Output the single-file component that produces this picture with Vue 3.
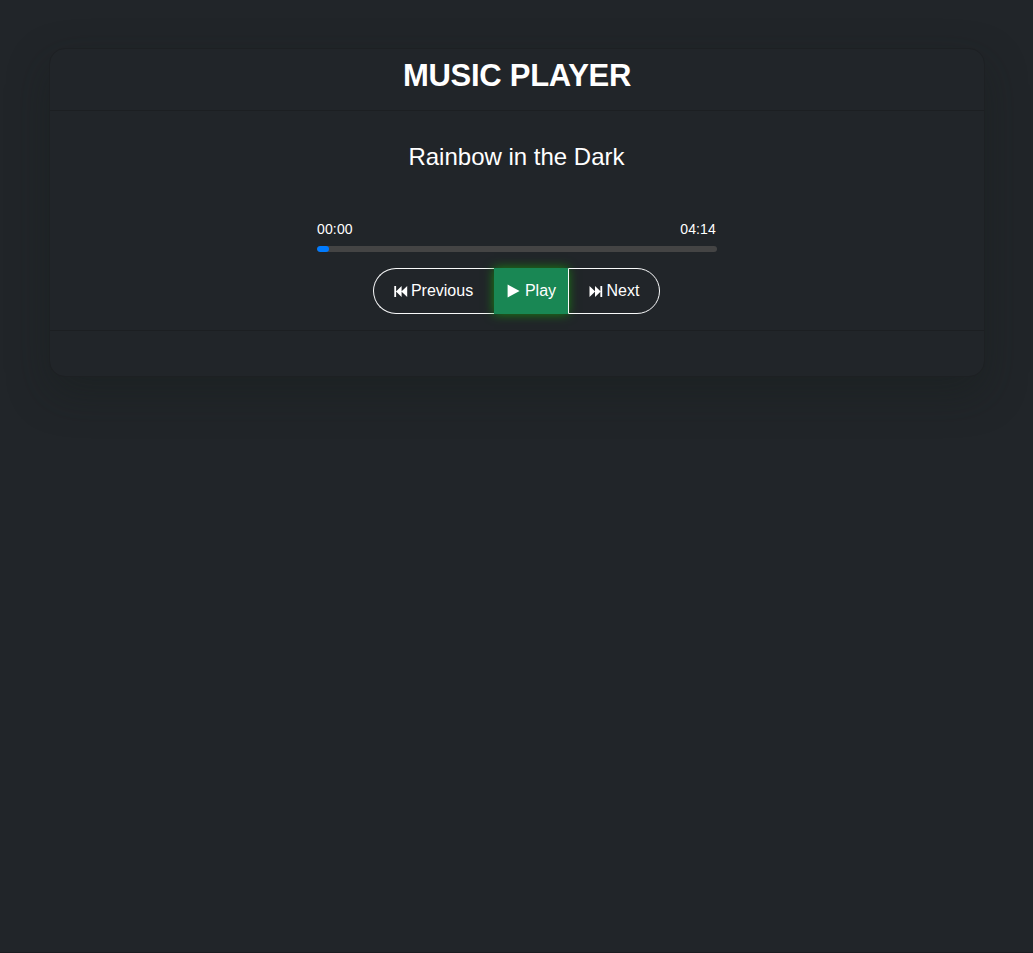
<script setup>
const currentTime = '00:00'
const duration = '04:14'
const progress = 3
</script>

<template>
  <main class="page">
    <section class="card">
      <header class="card-header">
        <h1>MUSIC PLAYER</h1>
      </header>
      <div class="card-body">
        <h2>Rainbow in the Dark</h2>
        <div class="player">
          <div class="times">
            <span>{{ currentTime }}</span>
            <span>{{ duration }}</span>
          </div>
          <div class="track">
            <div class="fill" :style="{ width: progress + '%' }"></div>
          </div>
        </div>
        <div class="controls">
          <button class="btn previous" type="button">
            <svg width="14" height="12" viewBox="0 0 14 12" fill="#fff">
              <path d="M0.3 1h1.8v11H0.3zM7.6 1v11L2 6.5zM13.2 1v11L7.4 6.5z" />
            </svg>
            <span>Previous</span>
          </button>
          <button class="btn play" type="button">
            <svg width="14" height="14" viewBox="0 0 14 14" fill="#fff">
              <path d="M0.6 0.5v13L12.6 7z" />
            </svg>
            <span>Play</span>
          </button>
          <button class="btn next" type="button">
            <svg width="14" height="12" viewBox="0 0 14 12" fill="#fff">
              <path d="M0.5 1v11L6.2 6.5zM6 1v11L11.7 6.5zM11.4 1h1.8v11h-1.8z" />
            </svg>
            <span>Next</span>
          </button>
        </div>
      </div>
      <footer class="card-footer"></footer>
    </section>
  </main>
</template>

<style>
body {
  margin: 0;
  background: #212529;
}
</style>

<style scoped>
.page {
  box-sizing: border-box;
  height: 953px;
  padding: 48px 48px 0 49px;
  border-bottom: 1px solid #1b1c20;
  overflow: hidden;
  background: #212529;
  color: #fff;
  font-family: "Liberation Sans", Arial, sans-serif;
}
.card {
  box-sizing: border-box;
  height: 329px;
  display: flex;
  flex-direction: column;
  border: 1px solid #1d2023;
  border-radius: 16px;
  background: #212529;
  box-shadow: 0 16px 42px rgba(22, 28, 26, 0.38);
}
.card-header {
  box-sizing: border-box;
  height: 62px;
  padding-top: 8px;
  border-bottom: 1px solid #1c1f22;
  text-align: center;
}
h1 {
  margin: 0;
  font-size: 31px;
  line-height: 38px;
  font-weight: 700;
  letter-spacing: -0.27px;
}
.card-body {
  box-sizing: border-box;
  height: 219px;
  padding-top: 31px;
  display: flex;
  flex-direction: column;
  align-items: center;
}
h2 {
  margin: 0 1px 48px 0;
  font-size: 24px;
  line-height: 29px;
  font-weight: 400;
}
.player {
  width: 400px;
}
.times {
  display: flex;
  justify-content: space-between;
  margin: 0 1px 6px 0;
  font-size: 14px;
  line-height: 21px;
  letter-spacing: 0.15px;
}
.track {
  height: 6px;
  border-radius: 3px;
  background: #444;
  overflow: hidden;
}
.fill {
  height: 100%;
  border-radius: 3px;
  background: #007bff;
}
.controls {
  display: flex;
  margin: 16px 2px 0 0;
}
.btn {
  box-sizing: border-box;
  height: 46px;
  padding: 0;
  display: flex;
  align-items: center;
  justify-content: center;
  gap: 4px;
  border: 1px solid #f8f9fa;
  background: transparent;
  color: #fff;
  font: 16px/24px "Liberation Sans", Arial, sans-serif;
}
.previous {
  width: 121px;
  gap: 3px;
  border-right: 0;
  border-radius: 23px 0 0 23px;
}
.play {
  width: 74px;
  padding-left: 2px;
  border-color: #198754;
  background: #198754;
  box-shadow: 0 0 10px rgb(24, 136, 16);
}
.next {
  width: 92px;
  padding-left: 1px;
  border-radius: 0 23px 23px 0;
}
.card-footer {
  flex: 1;
  border-top: 1px solid #1c1f22;
}
</style>
